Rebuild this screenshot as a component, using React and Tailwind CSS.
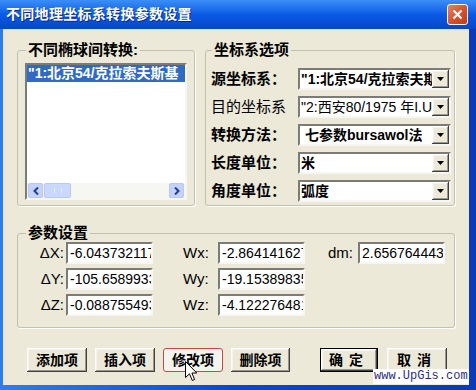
import React from 'react';

const cjk = "font-['Liberation_Sans','Noto_Sans_CJK_SC',sans-serif]";
const sunken = 'border-2 border-t-[#7b7b78] border-l-[#7b7b78] border-b-[#f6f6f2] border-r-[#f6f6f2]';
const raised = 'shadow-[inset_-1px_-1px_#404040,inset_1px_1px_#ffffff,inset_-2px_-2px_#9a9890,inset_2px_2px_#f4f3ee]';

// Combobox row in the 坐标系选项 group
const Combo = ({ text, bold, indent }) => (
  <div className={`flex h-[22px] w-[153px] items-center bg-white ${sunken}`}>
    <div
      className={`min-w-0 flex-1 overflow-hidden whitespace-nowrap text-[14px] leading-[18px] text-black ${
        bold ? 'font-bold' : ''
      } ${indent ? 'pl-[5px]' : 'pl-[1px]'}`}
    >
      {text}
    </div>
    <div className={`flex h-[18px] w-[17px] shrink-0 items-center justify-center bg-[#ece9d8] ${raised}`}>
      <svg width="7" height="4" viewBox="0 0 7 4">
        <path d="M0 0 H7 L3.5 4 Z" fill="#000" />
      </svg>
    </div>
  </div>
);

const OptionRow = ({ label, bold, value, valueBold, indent }) => (
  <div className="flex h-[22px] items-center">
    <div className={`w-[87px] text-[15px] leading-[16px] text-black ${bold ? 'font-bold' : ''}`}>{label}</div>
    <Combo text={value} bold={valueBold} indent={indent} />
  </div>
);

const NumBox = ({ children }) => (
  <div
    className={`flex h-[22px] w-[87px] items-center overflow-hidden whitespace-nowrap bg-white pl-[2px] font-['Liberation_Sans',sans-serif] text-[14px] leading-[16px] text-black ${sunken}`}
  >
    {children}
  </div>
);

const ParamRow = ({ d, dv, w, wv, extra }) => (
  <div className="flex h-[22px] items-center">
    <div className="w-[48px] pr-[2px] text-right font-['Liberation_Sans',sans-serif] text-[15px] text-black">{d}</div>
    <NumBox>{dv}</NumBox>
    <div className="ml-[30px] w-[35px] font-['Liberation_Sans',sans-serif] text-[15px] text-black">{w}</div>
    <NumBox>{wv}</NumBox>
    {extra}
  </div>
);

const Btn = ({ children, className = '' }) => (
  <div
    className={`flex h-[24px] items-center justify-center bg-[#ece9d8] text-[14px] font-bold leading-[16px] text-black ${className}`}
  >
    {children}
  </div>
);

const ScrollArrow = ({ dir }) => (
  <div className="flex h-[15px] w-[15px] items-center justify-center rounded-[2px] border border-[#b8c8f0] bg-[#c3d3fd]">
    <svg width="6" height="8" viewBox="0 0 6 8">
      <path
        d={dir === 'left' ? 'M5 0.5 L1.5 4 L5 7.5' : 'M1 0.5 L4.5 4 L1 7.5'}
        stroke="#1d3e9c"
        strokeWidth="2"
        fill="none"
      />
    </svg>
  </div>
);

export default function App() {
  return (
    <div className={`relative flex h-[390px] w-[476px] flex-col overflow-hidden bg-[#0a46d8] ${cjk}`}>
      {/* Title bar */}
      <div className="flex h-[29px] shrink-0 items-center justify-between bg-gradient-to-b from-[#3c8ef6] via-[#0b5ae6] to-[#0846c8] pl-[6px] pr-[8px]">
        <span className="text-[14px] font-bold tracking-[0.3px] text-white [text-shadow:1px_1px_#0a2a80]">
          不同地理坐标系转换参数设置
        </span>
        <div className="flex h-[21px] w-[21px] items-center justify-center rounded-[3px] border border-white bg-gradient-to-br from-[#e9825f] via-[#d9532f] to-[#c0391a]">
          <svg width="11" height="11" viewBox="0 0 11 11">
            <path d="M1.5 1.5 L9.5 9.5 M9.5 1.5 L1.5 9.5" stroke="#fff" strokeWidth="2.2" />
          </svg>
        </div>
      </div>

      {/* Client area */}
      <div className="flex-1 bg-gradient-to-r from-[#2f7cf0] via-[#0a46d8] to-[#0a3ab8] pb-[5px] pl-[3px] pr-[7px]">
        <div className="flex h-full flex-col bg-[#ece9d8] pl-[14px] pt-[13px]">
          <div className="flex gap-[10px]">
            {/* 不同椭球间转换 */}
            <fieldset className="h-[164px] w-[178px] rounded-[3px] border border-[#c2c0ae] px-[7px] pt-[5px] shadow-[1px_1px_0_#fff]">
              <legend className="ml-[1px] px-[2px] text-[15px] font-bold leading-[16px] text-black">不同椭球间转换:</legend>
              <div className={`flex h-[137px] w-[162px] flex-col bg-white ${sunken}`}>
                <div className="h-[17px] overflow-hidden whitespace-nowrap bg-[#316ac5] pl-[1px] text-[14px] font-bold leading-[17px] text-white">
                  "1:北京54/克拉索夫斯基
                </div>
                <div className="flex-1" />
                <div className="flex h-[15px] items-center bg-[#f6f6f2] pl-[1px] pr-[1px]">
                  <ScrollArrow dir="left" />
                  <div className="ml-[1px] flex h-[15px] w-[27px] items-center justify-center rounded-[2px] border border-[#b8c8f0] bg-[#c9d8fc]">
                    <div className="h-[5px] w-[8px] border-x border-[#e8eefc]" />
                  </div>
                  <div className="flex-1" />
                  <ScrollArrow dir="right" />
                </div>
              </div>
            </fieldset>

            {/* 坐标系选项 */}
            <fieldset className="h-[164px] w-[250px] rounded-[3px] border border-[#c2c0ae] pl-[5px] pt-[10px] shadow-[1px_1px_0_#fff]">
              <legend className="ml-[1px] px-[2px] text-[15px] font-bold leading-[16px] text-black">坐标系选项</legend>
              <div className="flex flex-col gap-[6px]">
                <OptionRow label="源坐标系：" bold value={'"1:北京54/克拉索夫斯基'} valueBold />
                <OptionRow label="目的坐标系" value={'"2:西安80/1975 年I.U.G.G'} />
                <OptionRow label="转换方法：" bold value="七参数bursawol法" valueBold indent />
                <OptionRow label="长度单位：" bold value="米" valueBold />
                <OptionRow label="角度单位：" bold value="弧度" valueBold />
              </div>
            </fieldset>
          </div>

          {/* 参数设置 */}
          <fieldset className="mt-[19px] h-[103px] w-[438px] rounded-[3px] border border-[#c2c0ae] pt-[1px] shadow-[1px_1px_0_#fff]">
            <legend className="ml-[8px] px-[2px] text-[15px] font-bold leading-[16px] text-black">参数设置</legend>
            <div className="flex flex-col gap-[4px]">
              <ParamRow
                d="ΔX:"
                dv="-6.043732117"
                w="Wx:"
                wv="-2.864141627"
                extra={
                  <>
                    <div className="ml-[23px] w-[30px] font-['Liberation_Sans',sans-serif] text-[15px] text-black">dm:</div>
                    <NumBox>
                      <span>2</span>
                      <span className="inline-block h-[15px] w-px bg-black" />
                      <span>.656764443</span>
                    </NumBox>
                  </>
                }
              />
              <ParamRow d="ΔY:" dv="-105.6589933" w="Wy:" wv="-19.15389835" />
              <ParamRow d="ΔZ:" dv="-0.088755493" w="Wz:" wv="-4.122276481" />
            </div>
          </fieldset>

          {/* Buttons */}
          <div className="mt-[20px] flex pl-[10px]">
            <Btn className={`w-[60px] ${raised}`}>添加项</Btn>
            <Btn className={`ml-[8px] w-[60px] ${raised}`}>插入项</Btn>
            <Btn className="ml-[8px] w-[60px] rounded-[3px] border border-[#c84848] bg-[#f4f3ee]">修改项</Btn>
            <Btn className={`ml-[8px] w-[59px] ${raised}`}>删除项</Btn>
            <Btn className={`ml-[30px] w-[58px] border border-black tracking-[6px] ${raised}`}>确定</Btn>
            <Btn className={`ml-[9px] w-[60px] tracking-[6px] ${raised}`}>取消</Btn>
          </div>
        </div>
      </div>

      {/* Watermark */}
      <div className="absolute left-[373px] top-[369px] bg-white px-[1px] font-['Liberation_Mono',monospace] text-[12px] leading-[15px] text-[#2b2f86]">
        www.UpGis.com
      </div>

      {/* Mouse cursor */}
      <svg className="absolute left-[185px] top-[361px]" width="13" height="21" viewBox="0 0 13 21">
        <path d="M0.5 0.5 L0.5 16.5 L4.5 12.8 L7.3 19.5 L9.6 18.5 L6.9 12 L11.8 12 Z" fill="#fff" stroke="#000" strokeWidth="1" />
      </svg>
    </div>
  );
}
